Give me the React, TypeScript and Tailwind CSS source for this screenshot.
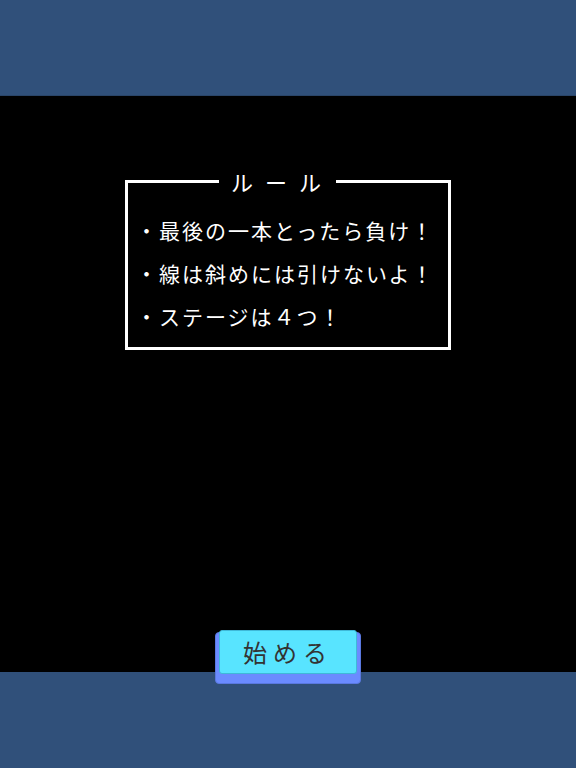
import React from "react";

const font = { fontFamily: '"Noto Sans CJK JP", "Noto Sans", sans-serif' };

export default function App() {
  return (
    <div className="w-[576px] h-[768px] flex flex-col bg-black relative overflow-hidden" style={font}>
      <div className="h-[96px] bg-[#30507a] border-b border-[#2a4568]" />
      <div className="h-[576px] bg-black">
        <div className="ml-[125px] mt-[84px] w-[326px] h-[170px] border-[3px] border-white relative">
          <div className="absolute left-[91px] top-[-16px] w-[117px] bg-black flex justify-start pl-[12px]">
            <span className="text-white text-[22px] leading-[28px] tracking-[12px]">ルール</span>
          </div>
          <ul className="pt-[26px] pl-[8px] text-white text-[21px] leading-[43px] tracking-[2px]">
            <li>・最後の一本とったら負け！</li>
            <li>・線は斜めには引けないよ！</li>
            <li>・ステージは４つ！</li>
          </ul>
        </div>
      </div>
      <div className="h-[96px] bg-[#30507a]" />
      <div className="absolute left-[215px] top-[632px] w-[146px] h-[52px] rounded-[4px] bg-[#6b8bff] border border-[#5a78e0]" />
      <button className="absolute left-[219px] top-[630px] w-[138px] h-[44px] rounded-[3px] bg-[#58e4ff] border border-[#3fb8d8] flex items-center justify-start pl-[23px]">
        <span className="text-[#333333] text-[24px] leading-none tracking-[6px]">始める</span>
      </button>
    </div>
  );
}
